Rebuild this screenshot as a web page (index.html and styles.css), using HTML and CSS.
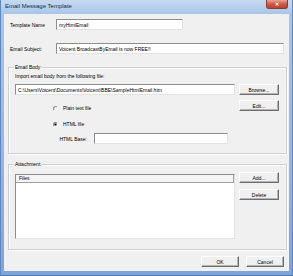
FILE: index.html
```html
<!DOCTYPE html>
<html lang="en">
<head>
    <meta charset="UTF-8">
    <title>Email Message Template</title>
    <link rel="stylesheet" href="styles.css">
</head>
<body>
    <div class="window">
        <div class="titlebar">
            <span class="title">Email Message Template</span>
            <span class="close">&#x2715;</span>
        </div>
        <div class="client">
            <div class="field-row row-name">
                <label class="field-label">Template Name</label>
                <input class="text name-input" type="text" value="myHtmlEmail">
            </div>
            <div class="field-row row-subject">
                <label class="field-label">Email Subject:</label>
                <input class="text subject-input" type="text" value="Voicent BroadcastByEmail is now FREE!!">
            </div>

            <!-- Email body group -->
            <div class="group body-group">
                <span class="group-title">Email Body</span>
                <p class="hint">Import email body from the following file:</p>
                <div class="path-row">
                    <input class="text path-input" type="text" value="C:\Users\Voicent\Documents\Voicent\BBE\SampleHtmlEmail.htm">
                    <button class="btn">Browse...</button>
                </div>
                <div class="options-row">
                    <div class="options">
                        <div class="radio-row plain"><span class="radio"></span>Plain text file</div>
                        <div class="radio-row html"><span class="radio checked"></span>HTML file</div>
                        <div class="base-row">
                            <label class="base-label">HTML Base:</label>
                            <input class="text base-input" type="text" value="">
                        </div>
                    </div>
                    <button class="btn edit-btn">Edit...</button>
                </div>
            </div>

            <!-- Attachment group -->
            <div class="group attach-group">
                <span class="group-title">Attachment</span>
                <div class="attach-row">
                    <div class="file-list">
                        <div class="list-header">Files</div>
                    </div>
                    <div class="attach-buttons">
                        <button class="btn">Add...</button>
                        <button class="btn">Delete</button>
                    </div>
                </div>
            </div>

            <div class="footer">
                <button class="btn">OK</button>
                <button class="btn">Cancel</button>
            </div>
        </div>
    </div>
</body>
</html>
```

FILE: styles.css
```css
* {
    box-sizing: border-box;
}
body {
    margin: 0;
    font-family: 'Liberation Sans', Arial, sans-serif;
    font-size: 5px;
    color: #000;
}
.window {
    width: 293px;
    height: 276px;
    padding: 0 4px 5px 4px;
    background: linear-gradient(#c6daf0, #a8c5e8 14px, #93b5e0 60%, #7ea4d8);
    box-shadow: inset 1px 0 #5f87c2, inset -1px 0 #5f87c2, inset 0 -1px #4d76b5;
}
.titlebar {
    height: 14px;
    display: flex;
    align-items: flex-start;
}
.title {
    font-size: 6px;
    line-height: 13px;
    padding-left: 1px;
    color: #1e2a3a;
}
.close {
    margin-left: auto;
    margin-right: 1px;
    width: 22px;
    height: 9px;
    background: linear-gradient(#e6a493, #cf5a45 50%, #c0402e);
    border: 1px solid #8c3a2e;
    border-top: none;
    border-radius: 0 0 3px 3px;
    color: #fff;
    font-size: 5px;
    font-weight: bold;
    line-height: 8px;
    text-align: center;
}
.client {
    height: 257px;
    background-color: #f0f0f0;
    padding-top: 5px;
}
.text {
    display: block;
    height: 11px;
    margin: 0;
    padding: 0 2px;
    border: 1px solid;
    border-color: #8d8d8d #e3e3e3 #e3e3e3 #8d8d8d;
    background-color: #fff;
    font: inherit;
    color: #000;
    outline: none;
}
.field-row {
    display: flex;
    align-items: center;
}
.field-label {
    width: 52px;
    padding-left: 6px;
}
.name-input {
    width: 127px;
}
.row-subject {
    margin-top: 13px;
}
.subject-input {
    width: 228px;
}
.btn {
    display: block;
    width: 40px;
    height: 11px;
    margin: 0;
    padding: 0;
    font: inherit;
    color: #000;
    background-color: #f0f0f0;
    border: 1px solid;
    border-color: #fff #6e6e6e #6e6e6e #fff;
    box-shadow: inset -1px -1px #b4b4b4;
}
.group {
    margin-left: 4px;
    width: 279px;
    border: 1px solid #cfcfcf;
    box-shadow: inset 1px 1px #fff, 1px 1px #fff;
}
.group-title {
    display: block;
    width: max-content;
    margin: -4px 0 0 5px;
    padding: 0 1px;
    line-height: 6px;
    background-color: #f0f0f0;
}
.body-group {
    margin-top: 13px;
    height: 87px;
}
.hint {
    margin: 3px 0 0 6px;
    line-height: 6px;
}
.path-row {
    display: flex;
    gap: 4px;
    margin: 5px 0 0 6px;
}
.path-input {
    width: 220px;
}
.options-row {
    display: flex;
    justify-content: space-between;
    margin: 5px 0 0 0;
    padding-right: 7px;
}
.edit-btn {
    margin-left: auto;
}
.options {
    padding-top: 5px;
}
.radio-row {
    display: flex;
    align-items: center;
    gap: 5px;
    margin-left: 44px;
    height: 6px;
}
.radio-row.html {
    margin-top: 10px;
}
.radio {
    width: 5px;
    height: 5px;
    border-radius: 50%;
    border: 1px solid;
    border-color: #8a8a8a #f8f8f8 #f8f8f8 #8a8a8a;
    background-color: #f0f0f0;
    position: relative;
}
.radio.checked::after {
    content: "";
    position: absolute;
    left: 1px;
    top: 1px;
    width: 1px;
    height: 1px;
    background-color: #000;
    box-shadow: 0 0 0 0.5px #000;
}
.base-row {
    display: flex;
    align-items: center;
    margin-top: 6px;
}
.base-label {
    width: 85px;
    padding-right: 7px;
    text-align: right;
}
.base-input {
    width: 134px;
}
.attach-group {
    margin-top: 10px;
    height: 86px;
}
.attach-row {
    display: flex;
    gap: 4px;
    margin: 5px 0 0 6px;
}
.file-list {
    width: 220px;
    height: 65px;
    margin-top: 2px;
    background-color: #fff;
    border: 1px solid;
    border-color: #8d8d8d #e3e3e3 #e3e3e3 #8d8d8d;
}
.list-header {
    height: 8px;
    line-height: 7px;
    padding-left: 3px;
    background-color: #f4f4f4;
    border-bottom: 1px solid #a0a0a0;
    border-right: 1px solid #a0a0a0;
}
.attach-buttons {
    display: flex;
    flex-direction: column;
    gap: 6px;
}
.footer {
    display: flex;
    justify-content: flex-end;
    gap: 7px;
    margin-top: 6px;
    padding-right: 5px;
}
.footer .btn {
    width: 38px;
}
```
